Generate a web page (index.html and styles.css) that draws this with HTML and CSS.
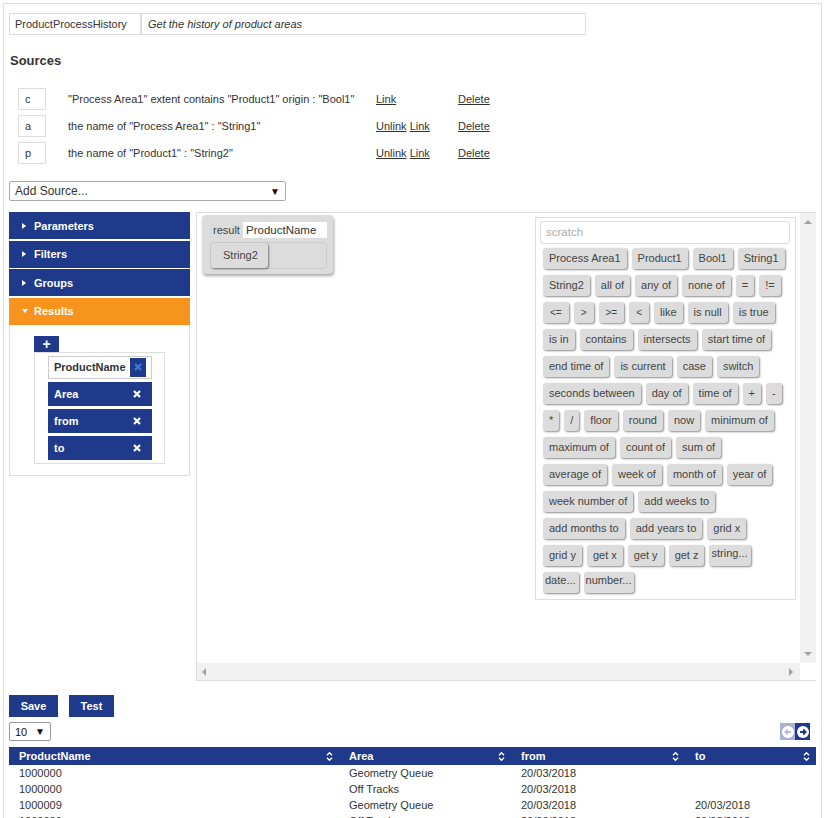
FILE: index.html
```html
<!DOCTYPE html>
<html>
<head>
<meta charset="utf-8">
<link rel="stylesheet" href="styles.css">
</head>
<body>
<div class="frame">
  <div class="title-row">
    <div class="name-box">ProductProcessHistory</div>
    <div class="desc-box">Get the history of product areas</div>
  </div>

  <h2 class="sources-h">Sources</h2>
  <div class="sources">
    <div class="src-row">
      <div class="src-key">c</div>
      <div class="src-text">"Process Area1" extent contains "Product1" origin : "Bool1"</div>
      <div class="src-links"><a>Link</a></div>
      <div class="src-del"><a>Delete</a></div>
    </div>
    <div class="src-row">
      <div class="src-key">a</div>
      <div class="src-text">the name of "Process Area1" : "String1"</div>
      <div class="src-links"><a>Unlink</a> <a>Link</a></div>
      <div class="src-del"><a>Delete</a></div>
    </div>
    <div class="src-row">
      <div class="src-key">p</div>
      <div class="src-text">the name of "Product1" : "String2"</div>
      <div class="src-links"><a>Unlink</a> <a>Link</a></div>
      <div class="src-del"><a>Delete</a></div>
    </div>
  </div>

  <div class="add-source"><span>Add Source...</span><span class="sel-arrow">&#9660;</span></div>

  <div class="panel">
    <div class="sidebar">
      <div class="acc-h"><span class="tri-r"></span>Parameters</div>
      <div class="acc-h"><span class="tri-r"></span>Filters</div>
      <div class="acc-h"><span class="tri-r"></span>Groups</div>
      <div class="acc-h active"><span class="tri-d"></span>Results</div>
      <div class="acc-body">
        <div class="plus-btn">+</div>
        <div class="res-list">
          <div class="res-item editing"><span>ProductName</span><span class="x-box"><svg width="8" height="8" viewBox="0 0 8 8"><path d="M1 1L7 7M7 1L1 7" stroke="#3a7bd0" stroke-width="2.2"/></svg></span></div>
          <div class="res-item"><span>Area</span><svg width="8" height="8" viewBox="0 0 8 8"><path d="M1 1L7 7M7 1L1 7" stroke="#fff" stroke-width="2.2"/></svg></div>
          <div class="res-item"><span>from</span><svg width="8" height="8" viewBox="0 0 8 8"><path d="M1 1L7 7M7 1L1 7" stroke="#fff" stroke-width="2.2"/></svg></div>
          <div class="res-item"><span>to</span><svg width="8" height="8" viewBox="0 0 8 8"><path d="M1 1L7 7M7 1L1 7" stroke="#fff" stroke-width="2.2"/></svg></div>
        </div>
      </div>
    </div>

    <div class="main">
      <div class="canvas">
        <div class="result-box">
          <div class="result-row"><span class="result-label">result</span><div class="result-input">ProductName</div></div>
          <div class="drop-area"><div class="chip big">String2</div></div>
        </div>
        <div class="scratch">
          <div class="scratch-input">scratch</div>
          <div class="chips">
            <div class="chip-row"><span class="chip">Process Area1</span><span class="chip">Product1</span><span class="chip">Bool1</span><span class="chip">String1</span></div>
            <div class="chip-row"><span class="chip">String2</span><span class="chip">all of</span><span class="chip">any of</span><span class="chip">none of</span><span class="chip">=</span><span class="chip">!=</span></div>
            <div class="chip-row"><span class="chip sym">&lt;=</span><span class="chip sym">&gt;</span><span class="chip sym">&gt;=</span><span class="chip sym">&lt;</span><span class="chip">like</span><span class="chip">is null</span><span class="chip">is true</span></div>
            <div class="chip-row"><span class="chip">is in</span><span class="chip">contains</span><span class="chip">intersects</span><span class="chip">start time of</span></div>
            <div class="chip-row"><span class="chip">end time of</span><span class="chip">is current</span><span class="chip">case</span><span class="chip">switch</span></div>
            <div class="chip-row"><span class="chip">seconds between</span><span class="chip">day of</span><span class="chip">time of</span><span class="chip">+</span><span class="chip">-</span></div>
            <div class="chip-row"><span class="chip">*</span><span class="chip">/</span><span class="chip">floor</span><span class="chip">round</span><span class="chip">now</span><span class="chip">minimum of</span></div>
            <div class="chip-row"><span class="chip">maximum of</span><span class="chip">count of</span><span class="chip">sum of</span></div>
            <div class="chip-row"><span class="chip">average of</span><span class="chip">week of</span><span class="chip">month of</span><span class="chip">year of</span></div>
            <div class="chip-row"><span class="chip">week number of</span><span class="chip">add weeks to</span></div>
            <div class="chip-row"><span class="chip">add months to</span><span class="chip">add years to</span><span class="chip">grid x</span></div>
            <div class="chip-row"><span class="chip">grid y</span><span class="chip">get x</span><span class="chip">get y</span><span class="chip">get z</span><span class="chip more">string...</span></div>
            <div class="chip-row"><span class="chip more">date...</span><span class="chip more">number...</span></div>
          </div>
        </div>
      </div>
      <div class="vbar"><span class="arr-up"></span><span class="arr-down"></span></div>
      <div class="hbar"><span class="arr-left"></span><span class="arr-right"></span></div>
      <div class="corner"></div>
    </div>
  </div>

  <div class="actions">
    <div class="btn save">Save</div>
    <div class="btn test">Test</div>
  </div>

  <div class="table-tools">
    <div class="page-size"><span>10</span><span class="sel-arrow">&#9660;</span></div>
    <div class="pager">
      <span class="pg prev"><svg width="12" height="12" viewBox="0 0 12 12"><circle cx="6" cy="6" r="6" fill="#fff"/><path d="M9 6H3.5M5.8 3.5L3.3 6L5.8 8.5" stroke="#b7bfdc" stroke-width="1.8" fill="none"/></svg></span>
      <span class="pg next"><svg width="12" height="12" viewBox="0 0 12 12"><circle cx="6" cy="6" r="6" fill="#fff"/><path d="M3 6H8.5M6.2 3.5L8.7 6L6.2 8.5" stroke="#1f3a8b" stroke-width="1.8" fill="none"/></svg></span>
    </div>
  </div>

  <table class="grid">
    <colgroup><col class="c1"><col class="c2"><col class="c3"><col class="c4"></colgroup>
    <thead>
      <tr>
        <th><div class="th-in"><span>ProductName</span><svg class="sort" width="7" height="11" viewBox="0 0 7 11"><path d="M1 4.2L3.5 1.7L6 4.2M1 6.8L3.5 9.3L6 6.8" stroke="#fff" stroke-width="1.4" fill="none"/></svg></div></th>
        <th><div class="th-in"><span>Area</span><svg class="sort" width="7" height="11" viewBox="0 0 7 11"><path d="M1 4.2L3.5 1.7L6 4.2M1 6.8L3.5 9.3L6 6.8" stroke="#fff" stroke-width="1.4" fill="none"/></svg></div></th>
        <th><div class="th-in"><span>from</span><svg class="sort" width="7" height="11" viewBox="0 0 7 11"><path d="M1 4.2L3.5 1.7L6 4.2M1 6.8L3.5 9.3L6 6.8" stroke="#fff" stroke-width="1.4" fill="none"/></svg></div></th>
        <th><div class="th-in"><span>to</span><svg class="sort" width="7" height="11" viewBox="0 0 7 11"><path d="M1 4.2L3.5 1.7L6 4.2M1 6.8L3.5 9.3L6 6.8" stroke="#fff" stroke-width="1.4" fill="none"/></svg></div></th>
      </tr>
    </thead>
    <tbody>
      <tr><td>1000000</td><td>Geometry Queue</td><td>20/03/2018</td><td></td></tr>
      <tr><td>1000000</td><td>Off Tracks</td><td>20/03/2018</td><td></td></tr>
      <tr><td>1000009</td><td>Geometry Queue</td><td>20/03/2018</td><td>20/03/2018</td></tr>
      <tr><td>1000009</td><td>Off Tracks</td><td>20/03/2018</td><td>20/03/2018</td></tr>
    </tbody>
  </table>
</div>
</body>
</html>
```

FILE: styles.css
```css
* { box-sizing: border-box; }

body {
  margin: 0;
  font-family: "Liberation Sans", Arial, sans-serif;
  font-size: 11px;
  color: #333;
  background: #fff;
  overflow: hidden;
}

.frame {
  margin: 3px 0 0 3px;
  width: 819px;
  min-height: 830px;
  border: 1px solid #ddd;
  border-bottom: none;
  padding: 9px 5px 0 5px;
}

/* title */
.title-row { display: flex; height: 22px; }
.name-box {
  width: 132px;
  border: 1px solid #ddd;
  padding-left: 5px;
  line-height: 20px;
}
.desc-box {
  width: 445px;
  border: 1px solid #ddd;
  padding-left: 6px;
  line-height: 20px;
  font-style: italic;
}

/* sources */
.sources-h {
  margin: 18px 0 0 1px;
  font-size: 13px;
  line-height: 16px;
  font-weight: bold;
  color: #333;
}
.sources {
  margin-top: 19px;
  padding-left: 9px;
  display: flex;
  flex-direction: column;
  gap: 5px;
}
.src-row { display: flex; align-items: center; height: 22px; }
.src-key {
  width: 28px;
  height: 22px;
  border: 1px solid #ddd;
  padding-left: 6px;
  line-height: 20px;
}
.src-text { margin-left: 22px; width: 308px; }
.src-links { width: 82px; }
a { text-decoration: underline; color: #333; }

.add-source {
  margin-top: 17px;
  width: 277px;
  height: 20px;
  border: 1px solid #a9a9a9;
  border-radius: 2px;
  padding: 0 5px 0 5px;
  display: flex;
  justify-content: space-between;
  align-items: center;
  font-size: 12px;
}
.sel-arrow { font-size: 10px; color: #111; }

/* panel */
.panel { display: flex; gap: 6px; margin-top: 11px; align-items: flex-start; }

.sidebar { width: 181px; }
.acc-h {
  height: 27px;
  margin-bottom: 1.5px;
  background: #1f3a8b;
  color: #fff;
  font-weight: bold;
  display: flex;
  align-items: center;
  padding-left: 13px;
}
.acc-h.active { background: #f7941e; margin-bottom: 0; }
.tri-r {
  width: 0; height: 0;
  border-left: 4px solid #fff;
  border-top: 3.5px solid transparent;
  border-bottom: 3.5px solid transparent;
  margin-right: 8px;
}
.tri-d {
  width: 0; height: 0;
  border-top: 4px solid #fff;
  border-left: 3.5px solid transparent;
  border-right: 3.5px solid transparent;
  margin-right: 6px;
}
.acc-body {
  height: 151px;
  border: 1px solid #ddd;
  border-top: none;
  padding: 11px 0 0 24px;
}
.plus-btn {
  width: 25px;
  height: 16px;
  background: #1f3a8b;
  color: #fff;
  font-weight: bold;
  font-size: 14px;
  line-height: 16px;
  text-align: center;
}
.res-list {
  width: 131px;
  height: 112px;
  border: 1px solid #ddd;
  padding: 3px 0 0 13px;
  display: flex;
  flex-direction: column;
  gap: 3px;
}
.res-item {
  width: 104px;
  height: 24px;
  background: #1f3a8b;
  color: #fff;
  font-weight: bold;
  display: flex;
  align-items: center;
  justify-content: space-between;
  padding: 0 11px 0 6px;
}
.res-item.editing {
  background: #fff;
  color: #333;
  border: 1px solid #ccc;
  height: 23px;
  padding: 0 5px 0 5px;
}
.x-box {
  width: 16px;
  height: 19px;
  background: #1f3a8b;
  display: flex;
  align-items: center;
  justify-content: center;
}

/* main */
.main {
  flex: 1;
  height: 469px;
  border-top: 1px solid #ddd;
  border-left: 1px solid #ddd;
  border-bottom: 1px solid #ddd;
  display: grid;
  grid-template-columns: 1fr 16px;
  grid-template-rows: 1fr 17px;
}
.canvas {
  display: flex;
  justify-content: space-between;
  align-items: flex-start;
  padding: 2px 4px 0 5px;
  overflow: hidden;
}
.vbar {
  background: #f1f1f1;
  display: flex;
  flex-direction: column;
  justify-content: space-between;
  align-items: center;
  padding: 7px 0 7px;
}
.hbar {
  background: #f1f1f1;
  display: flex;
  justify-content: space-between;
  align-items: center;
  padding: 0 7px 0 5px;
}
.corner { background: #fff; }
.arr-up { width: 0; height: 0; border-bottom: 4px solid #a3a3a3; border-left: 4px solid transparent; border-right: 4px solid transparent; }
.arr-down { width: 0; height: 0; border-top: 4px solid #a3a3a3; border-left: 4px solid transparent; border-right: 4px solid transparent; }
.arr-left { width: 0; height: 0; border-right: 4px solid #a3a3a3; border-top: 4px solid transparent; border-bottom: 4px solid transparent; }
.arr-right { width: 0; height: 0; border-left: 4px solid #a3a3a3; border-top: 4px solid transparent; border-bottom: 4px solid transparent; }

.result-box {
  width: 131px;
  height: 59px;
  background: #dcdcdc;
  border-radius: 4px;
  box-shadow: 1px 2px 3px rgba(0,0,0,0.35);
  padding: 7px 6px 0 8px;
}
.result-row { display: flex; align-items: center; }
.result-label { margin-left: 3px; width: 30px; color: #444; }
.result-input {
  width: 84px;
  height: 16px;
  background: #fff;
  padding-left: 3px;
  line-height: 16px;
  font-size: 11.5px;
}
.drop-area {
  margin-top: 4px;
  width: 117px;
  height: 27px;
  border: 1px solid #ccc;
  border-radius: 3px;
}
.chip {
  display: inline-block;
  height: 21px;
  line-height: 21px;
  padding: 0 6px;
  background: #dcdcdc;
  border-radius: 3px;
  box-shadow: 1px 1px 2px rgba(0,0,0,0.45);
  color: #444;
  margin-right: 5px;
  white-space: nowrap;
}
.chip.big {
  height: 25px;
  line-height: 25px;
  padding: 0 10px 0 12px;
  margin: 0;
}
.chip.sym { font-size: 10px; padding: 0 7px; }
.chip.more { padding: 0 3px 0 2px; line-height: 17px; }

.scratch {
  margin-top: 2px;
  width: 261px;
  border: 1px solid #ddd;
  padding: 3px 5px 5px 4px;
  background: #fff;
}
.scratch-input {
  width: 250px;
  height: 23px;
  border: 1px solid #ddd;
  border-radius: 3px;
  padding-left: 5px;
  line-height: 21px;
  color: #aaa;
  font-size: 11.5px;
}
.chips { padding-left: 3px; margin-top: 4px; }
.chip-row { display: flex; height: 22px; margin-bottom: 5px; }
.chip-row:last-child { margin-bottom: 0; }

/* bottom */
.actions { display: flex; gap: 11px; margin-top: 14px; }
.btn {
  height: 22px;
  background: #1f3a8b;
  color: #fff;
  font-weight: bold;
  text-align: center;
  line-height: 22px;
}
.btn.save { width: 49px; }
.btn.test { width: 45px; }

.table-tools {
  display: flex;
  justify-content: space-between;
  align-items: flex-start;
  margin-top: 5px;
  padding-right: 6px;
}
.page-size {
  width: 42px;
  height: 19px;
  border: 1px solid #999;
  border-radius: 2px;
  display: flex;
  justify-content: space-between;
  align-items: center;
  padding: 0 5px 0 5px;
  font-size: 11px;
  color: #111;
}
.pager { display: flex; margin-top: 1px; }
.pg {
  width: 15px;
  height: 17px;
  display: flex;
  align-items: center;
  justify-content: center;
}
.pg.prev { background: #a9b2d5; }
.pg.next { background: #1f3a8b; }

.grid {
  margin-top: 6px;
  width: 807px;
  border-collapse: collapse;
  table-layout: fixed;
}
.c1 { width: 330px; }
.c2 { width: 172px; }
.c3 { width: 174px; }
.c4 { width: 131px; }
.grid th {
  background: #1f3a8b;
  color: #fff;
  font-weight: bold;
  height: 18px;
  padding: 0 6px 0 10px;
  text-align: left;
}
.th-in { display: flex; justify-content: space-between; align-items: center; }
.grid td {
  height: 16px;
  padding: 0 0 0 10px;
  line-height: 16px;
  color: #333;
}
```
